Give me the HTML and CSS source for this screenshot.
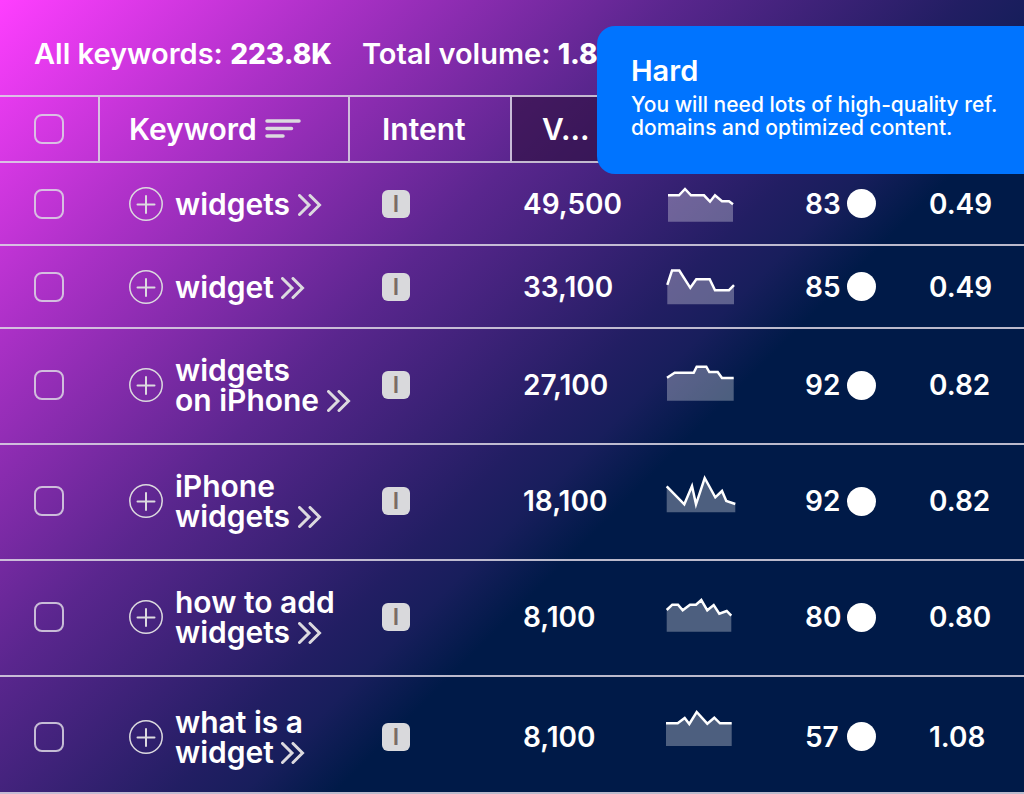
FILE: index.html
```html
<!doctype html>
<html lang="en">
  <head>
    <meta charset="UTF-8" />
    <meta name="viewport" content="width=device-width, initial-scale=1.0" />
    <title>Keyword overview</title>
    <link rel="stylesheet" href="styles.css">
  </head>
  <body>
    <!-- shared icons -->
    <svg class="sprite" aria-hidden="true">
      <symbol id="plus" viewBox="0 0 34 34">
        <circle cx="17" cy="17" r="16.2" stroke-width="1.5" />
        <path d="M8.5 17.5h17M17 9v17" stroke-width="2" />
      </symbol>
      <symbol id="more" viewBox="0 0 24 22">
        <path d="M1.500 1.500l9.500 9.500-9.500 9.500M12 1.500l9.500 9.500-9.500 9.500" stroke-width="3" />
      </symbol>
      <symbol id="sort" viewBox="0 0 36 20">
        <path d="M2 2h32M2 9.500h24.500M2 17h16" stroke-width="3.500" />
      </symbol>
    </svg>

    <main class="page">
      <div class="summary">
        <span>All keywords: <strong>223.8K</strong></span>
        <span>Total volume: <strong>1.8M</strong></span>
      </div>

      <table class="keywords">
        <colgroup>
          <col class="col-check" />
          <col class="col-keyword" />
          <col class="col-intent" />
          <col class="col-volume" />
          <col class="col-trend" />
          <col class="col-kd" />
          <col />
        </colgroup>
        <thead>
          <tr>
            <th class="check"><input type="checkbox" aria-label="Select all keywords" /></th>
            <th class="keyword"><span class="label">Keyword <svg class="sort"><use href="#sort" /></svg></span></th>
            <th class="intent">Intent</th>
            <th class="volume sorted"><span class="label">V... <svg class="sort"><use href="#sort" /></svg></span></th>
            <th class="sorted"></th>
            <th class="sorted"></th>
            <th class="sorted"></th>
          </tr>
        </thead>
        <tbody>
          <tr>
            <td class="check"><input type="checkbox" aria-label="Select widgets" /></td>
            <td class="keyword">
              <div class="term">
                <button class="add" aria-label="Add widgets"><svg><use href="#plus" /></svg></button>
                <a href="#">widgets <svg class="more"><use href="#more" /></svg></a>
              </div>
            </td>
            <td class="intent"><span class="badge">I</span></td>
            <td class="volume">49,500</td>
            <td class="trend">
              <svg viewBox="0 0 72 48">
                <path class="area" d="M4 15.300H15L21 9L27 15.300H40L46 21.700L51 15.300L58 21.300H65L69 24.300V41.700H4Z" />
                <path class="line" d="M4 15.300H15L21 9L27 15.300H40L46 21.700L51 15.300L58 21.300H65L69 24.300" />
              </svg>
            </td>
            <td class="kd"><div class="score">83 <i class="dot"></i></div></td>
            <td class="cpc">0.49</td>
          </tr>
          <tr>
            <td class="check"><input type="checkbox" aria-label="Select widget" /></td>
            <td class="keyword">
              <div class="term">
                <button class="add" aria-label="Add widget"><svg><use href="#plus" /></svg></button>
                <a href="#">widget <svg class="more"><use href="#more" /></svg></a>
              </div>
            </td>
            <td class="intent"><span class="badge">I</span></td>
            <td class="volume">33,100</td>
            <td class="trend">
              <svg viewBox="0 0 72 48">
                <path class="area" d="M3.300 21.800L8 7.500H15.300L26.300 24.800L32.300 16.200H45.700L51 27.200H65L70 22.200V41.200H3.300Z" />
                <path class="line" d="M3.300 21.800L8 7.500H15.300L26.300 24.800L32.300 16.200H45.700L51 27.200H65L70 22.200" />
              </svg>
            </td>
            <td class="kd"><div class="score">85 <i class="dot"></i></div></td>
            <td class="cpc">0.49</td>
          </tr>
          <tr class="tall">
            <td class="check"><input type="checkbox" aria-label="Select widgets on iPhone" /></td>
            <td class="keyword">
              <div class="term">
                <button class="add" aria-label="Add widgets on iPhone"><svg><use href="#plus" /></svg></button>
                <a href="#">widgets<br />on iPhone <svg class="more"><use href="#more" /></svg></a>
              </div>
            </td>
            <td class="intent"><span class="badge">I</span></td>
            <td class="volume">27,100</td>
            <td class="trend">
              <svg viewBox="0 0 72 48">
                <path class="area" d="M3 16.700L10.700 11.700H29.700L32.700 5.700H42.300L45.300 11H53.700L58 17H69.700V39.700H3Z" />
                <path class="line" d="M3 16.700L10.700 11.700H29.700L32.700 5.700H42.300L45.300 11H53.700L58 17H69.700" />
              </svg>
            </td>
            <td class="kd"><div class="score">92 <i class="dot"></i></div></td>
            <td class="cpc">0.82</td>
          </tr>
          <tr class="tall">
            <td class="check"><input type="checkbox" aria-label="Select iPhone widgets" /></td>
            <td class="keyword">
              <div class="term">
                <button class="add" aria-label="Add iPhone widgets"><svg><use href="#plus" /></svg></button>
                <a href="#">iPhone<br />widgets <svg class="more"><use href="#more" /></svg></a>
              </div>
            </td>
            <td class="intent"><span class="badge">I</span></td>
            <td class="volume">18,100</td>
            <td class="trend">
              <svg viewBox="0 0 72 48">
                <path class="area" d="M2.700 9.300L20.300 27.300L28 9L32 27.300L40.700 1L51.300 20.300L58 14L62.300 24L71.300 27V35.300H2.700Z" />
                <path class="line" d="M2.700 9.300L20.300 27.300L28 9L32 27.300L40.700 1L51.300 20.300L58 14L62.300 24L71.300 27" />
              </svg>
            </td>
            <td class="kd"><div class="score">92 <i class="dot"></i></div></td>
            <td class="cpc">0.82</td>
          </tr>
          <tr class="tall">
            <td class="check"><input type="checkbox" aria-label="Select how to add widgets" /></td>
            <td class="keyword">
              <div class="term">
                <button class="add" aria-label="Add how to add widgets"><svg><use href="#plus" /></svg></button>
                <a href="#">how to add<br />widgets <svg class="more"><use href="#more" /></svg></a>
              </div>
            </td>
            <td class="intent"><span class="badge">I</span></td>
            <td class="volume">8,100</td>
            <td class="trend">
              <svg viewBox="0 0 72 48">
                <path class="area" d="M2.700 17L8.300 11.700H14L18.700 17.300L26 11.700H32L37.300 7L43.300 17.300L49.700 12L55.300 20.700L62.700 18L67.300 22.700V38.700H2.700Z" />
                <path class="line" d="M2.700 17L8.300 11.700H14L18.700 17.300L26 11.700H32L37.300 7L43.300 17.300L49.700 12L55.300 20.700L62.700 18L67.300 22.700" />
              </svg>
            </td>
            <td class="kd"><div class="score">80 <i class="dot"></i></div></td>
            <td class="cpc">0.80</td>
          </tr>
          <tr class="tall last">
            <td class="check"><input type="checkbox" aria-label="Select what is a widget" /></td>
            <td class="keyword">
              <div class="term">
                <button class="add" aria-label="Add what is a widget"><svg><use href="#plus" /></svg></button>
                <a href="#">what is a<br />widget <svg class="more"><use href="#more" /></svg></a>
              </div>
            </td>
            <td class="intent"><span class="badge">I</span></td>
            <td class="volume">8,100</td>
            <td class="trend">
              <svg viewBox="0 0 72 48">
                <path class="area" d="M2 10.300H13.700L20.700 5L25.300 11L32.700 -1L43.300 10.700L50.300 4.700L56 10.300H67.700V33H2Z" />
                <path class="line" d="M2 10.300H13.700L20.700 5L25.300 11L32.700 -1L43.300 10.700L50.300 4.700L56 10.300H67.700" />
              </svg>
            </td>
            <td class="kd"><div class="score">57 <i class="dot"></i></div></td>
            <td class="cpc">1.08</td>
          </tr>
        </tbody>
      </table>

      <div class="tooltip" role="tooltip">
        <h2>Hard</h2>
        <p>You will need lots of high-quality ref.<br />domains and optimized content.</p>
      </div>
    </main>
  </body>
</html>
```
FILE: styles.css
```css
* {
  box-sizing: border-box;
}
body {
  margin: 0;
  font-family: Inter, "Open Sans", sans-serif;
  font-size: 28px;
  font-weight: 600;
  line-height: 30px;
  color: #ffffff;
}
.page {
  position: relative;
  min-height: 100vh;
  overflow: hidden;
  background: linear-gradient(135deg, #ff3eff 0%, #a930c5 19%, #5a268e 37%, #221e63 53%, #181e5c 57%, #001a48 62%);
}
.sprite {
  position: absolute;
  width: 0;
  height: 0;
}
symbol {
  fill: none;
  stroke: #dcdadf;
  stroke-linecap: round;
}
.summary {
  display: flex;
  align-items: center;
  gap: 30px;
  height: 95px;
  padding: 13px 34px 0;
  font-size: 29px;
  white-space: nowrap;
}
.summary strong {
  font-size: 28px;
  font-weight: 800;
}

/* table */
.keywords {
  width: 100%;
  table-layout: fixed;
  border-collapse: separate;
  border-spacing: 0;
}
.col-check {
  width: 100px;
}
.col-keyword {
  width: 250px;
}
.col-intent {
  width: 162px;
}
.col-volume {
  width: 152px;
}
.col-trend {
  width: 141px;
}
.col-kd {
  width: 124px;
}
th,
td {
  padding: 0;
  font-weight: 600;
  text-align: left;
  vertical-align: middle;
  white-space: nowrap;
  border-bottom: 2px solid rgba(220, 215, 228, 0.85);
}
th {
  height: 68px;
  font-size: 30px;
  border-top: 2px solid rgba(220, 215, 228, 0.85);
}
th.check,
th.keyword,
th.intent {
  border-right: 2px solid rgba(220, 215, 228, 0.85);
}
td {
  height: 83px;
}
.tall td {
  height: 116px;
  padding-bottom: 2px;
}
.last td {
  height: 117px;
  padding-top: 4px;
  padding-bottom: 0;
}
.check {
  padding-left: 34px;
}
.keyword {
  padding-left: 29px;
}
.intent {
  padding-left: 32px;
}
.volume {
  padding-left: 11px;
}
th.volume {
  padding-left: 30px;
}
th.sorted {
  background: rgba(45, 15, 60, 0.6);
}
.label {
  display: flex;
  align-items: center;
  gap: 8px;
}
.sort {
  width: 36px;
  height: 20px;
}
input[type="checkbox"] {
  appearance: none;
  display: block;
  width: 30px;
  height: 30px;
  margin: 0;
  border: 2px solid rgba(220, 215, 228, 0.85);
  border-radius: 8px;
}
input[type="checkbox"]:checked {
  background: #dcdadf;
}
.term {
  display: flex;
  align-items: center;
  gap: 12px;
}
.add {
  width: 34px;
  height: 34px;
  padding: 0;
  border: none;
  background: none;
  cursor: pointer;
}
.add svg {
  display: block;
  width: 34px;
  height: 34px;
}
.term a {
  color: inherit;
  font-size: 30px;
  text-decoration: none;
}
.more {
  width: 24px;
  height: 22px;
  vertical-align: -1px;
}
.badge {
  display: block;
  width: 28px;
  height: 28px;
  border-radius: 6px;
  background: #d9d9dc;
  color: #7a6c66;
  font-size: 23px;
  line-height: 28px;
  text-align: center;
}
.trend svg {
  display: block;
  width: 72px;
  height: 48px;
  overflow: visible;
}
.area {
  fill: rgba(255, 255, 255, 0.3);
}
.line {
  fill: none;
  stroke: #ffffff;
  stroke-width: 2.5;
}
.score {
  display: flex;
  align-items: center;
  justify-content: space-between;
  width: 71px;
}
.dot {
  width: 29px;
  height: 29px;
  border-radius: 50%;
  background: #ffffff;
}

/* difficulty hint over the table header */
.tooltip {
  position: absolute;
  top: 26px;
  right: 0;
  width: 427px;
  padding: 30px 0 35px 34px;
  border-radius: 18px 0 0 18px;
  background: #0074ff;
  white-space: nowrap;
}
.tooltip h2 {
  margin: 0 0 7px;
  font-size: 29px;
  font-weight: 600;
  line-height: 30px;
}
.tooltip p {
  margin: 0;
  font-size: 21px;
  font-weight: 500;
  line-height: 23px;
}
```
